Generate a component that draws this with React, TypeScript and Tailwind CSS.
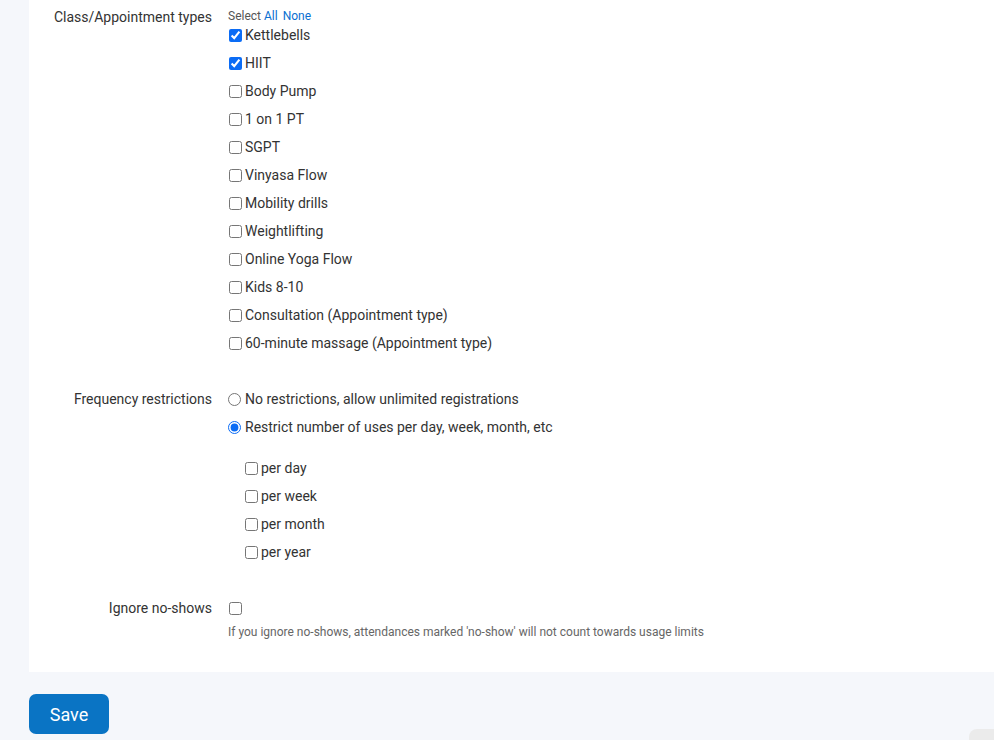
import React from "react";

const items = [
  { label: "Kettlebells", checked: true },
  { label: "HIIT", checked: true },
  { label: "Body Pump", checked: false },
  { label: "1 on 1 PT", checked: false },
  { label: "SGPT", checked: false },
  { label: "Vinyasa Flow", checked: false },
  { label: "Mobility drills", checked: false },
  { label: "Weightlifting", checked: false },
  { label: "Online Yoga Flow", checked: false },
  { label: "Kids 8-10", checked: false },
  { label: "Consultation (Appointment type)", checked: false },
  { label: "60-minute massage (Appointment type)", checked: false },
];

const periods = ["per day", "per week", "per month", "per year"];

function Check({ checked, label }: { checked: boolean; label: string }) {
  return (
    <label className="flex h-[28px] items-center">
      <input
        type="checkbox"
        defaultChecked={checked}
        className="m-0 ml-[1px] h-[13px] w-[13px] accent-[#0b6cf5]"
      />
      <span className="ml-[3px]">{label}</span>
    </label>
  );
}

export default function App() {
  return (
    <div
      className="relative min-h-[740px] w-full overflow-hidden bg-[#f5f7fb] text-[14px] text-[#333333]"
      style={{ fontFamily: "Roboto, 'Liberation Sans', sans-serif" }}
    >
      <div className="ml-[29px] bg-white pb-[33px] pt-[7px]">
        {/* Class/Appointment types */}
        <div className="flex">
          <div className="w-[183px] shrink-0 text-right leading-[20px]">Class/Appointment types</div>
          <div className="ml-[16px]">
            <div className="mt-[2px] text-[12px] leading-[14px] text-[#555]">
              Select <span className="text-[#0a6fd1]">All</span>
              <span className="ml-[5px] text-[#0a6fd1]">None</span>
            </div>
            <div className="-mt-[2px]">
              {items.map((it) => (
                <Check key={it.label} checked={it.checked} label={it.label} />
              ))}
            </div>
          </div>
        </div>

        {/* Frequency restrictions */}
        <div className="mt-[28px] flex">
          <div className="flex h-[28px] w-[183px] shrink-0 items-center justify-end">Frequency restrictions</div>
          <div className="ml-[16px]">
            <label className="flex h-[28px] items-center">
              <input type="radio" name="freq" className="m-0 h-[13px] w-[13px] accent-[#0b6cf5]" />
              <span className="ml-[4px]">No restrictions, allow unlimited registrations</span>
            </label>
            <label className="flex h-[28px] items-center">
              <input type="radio" name="freq" defaultChecked className="m-0 h-[13px] w-[13px] accent-[#0b6cf5]" />
              <span className="ml-[4px]">Restrict number of uses per day, week, month, etc</span>
            </label>
            <div className="ml-[16px] mt-[13px]">
              {periods.map((p) => (
                <Check key={p} checked={false} label={p} />
              ))}
            </div>
          </div>
        </div>

        {/* Ignore no-shows */}
        <div className="mt-[28px] flex">
          <div className="flex h-[28px] w-[183px] shrink-0 items-center justify-end">Ignore no-shows</div>
          <div className="ml-[16px]">
            <div className="flex h-[28px] items-center">
              <input type="checkbox" className="m-0 ml-[1px] h-[13px] w-[13px] accent-[#0b6cf5]" />
            </div>
            <div className="mt-[3px] text-[12px] leading-[14px] text-[#666]">
              If you ignore no-shows, attendances marked 'no-show' will not count towards usage limits
            </div>
          </div>
        </div>
      </div>

      <div className="ml-[29px] mt-[22px]">
        <button className="h-[40px] w-[80px] rounded-[7px] bg-[#0a74c4] text-[18px] text-white">Save</button>
      </div>

      <div className="absolute bottom-[-10px] right-[-10px] h-[21px] w-[35px] rounded-tl-[8px] bg-[#ebebeb]" />
    </div>
  );
}
